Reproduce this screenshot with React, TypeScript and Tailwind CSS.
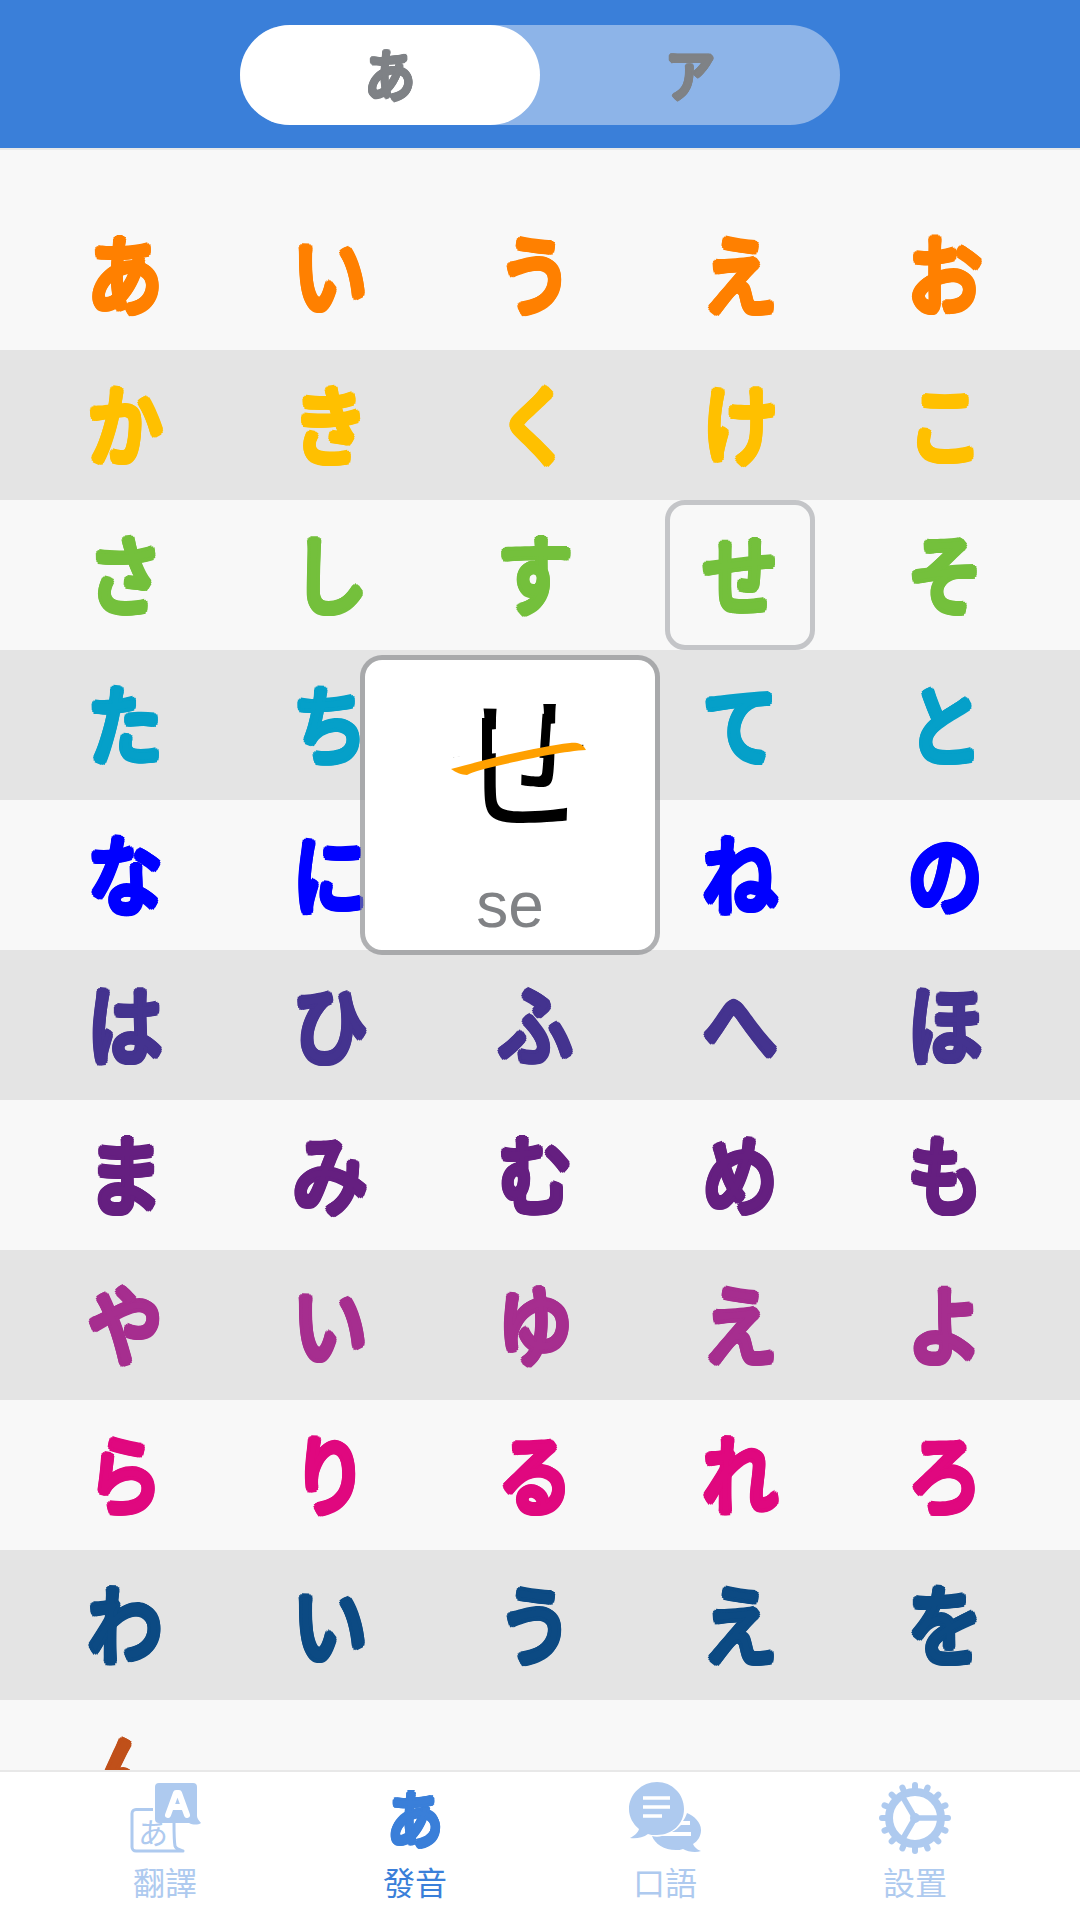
const CJK = "font-['Noto_Sans_CJK_JP',sans-serif]";
const CJK_TC = "font-['Noto_Sans_CJK_TC',sans-serif]";

type Row = { chars: string[]; color: string; dark: boolean; first?: boolean };

const rows: Row[] = [
  { chars: ["あ", "い", "う", "え", "お"], color: "text-[#ff8000]", dark: false, first: true },
  { chars: ["か", "き", "く", "け", "こ"], color: "text-[#ffc000]", dark: true },
  { chars: ["さ", "し", "す", "せ", "そ"], color: "text-[#74c03c]", dark: false },
  { chars: ["た", "ち", "つ", "て", "と"], color: "text-[#05a0c9]", dark: true },
  { chars: ["な", "に", "ぬ", "ね", "の"], color: "text-[#0000ff]", dark: false },
  { chars: ["は", "ひ", "ふ", "へ", "ほ"], color: "text-[#44338f]", dark: true },
  { chars: ["ま", "み", "む", "め", "も"], color: "text-[#651f80]", dark: false },
  { chars: ["や", "い", "ゆ", "え", "よ"], color: "text-[#a62e8f]", dark: true },
  { chars: ["ら", "り", "る", "れ", "ろ"], color: "text-[#e0087f]", dark: false },
  { chars: ["わ", "い", "う", "え", "を"], color: "text-[#0c4a83]", dark: true },
];

function Kana({ c }: { c: string }) {
  return (
    <span
      className={`${CJK} inline-block -translate-y-1 scale-x-[0.87] text-[86px] font-normal leading-none [text-shadow:4px_0,3.5px_2px,2px_3.5px,0_4px,-2px_3.5px,-3.5px_2px,-4px_0,-3.5px_-2px,-2px_-3.5px,0_-4px,2px_-3.5px,3.5px_-2px]`}
    >
      {c}
    </span>
  );
}

function TranslateIcon() {
  return (
    <svg width="72" height="72" viewBox="0 0 72 72" fill="none">
      <path d="M24 27.5H7a4 4 0 0 0-4 4V65a4 4 0 0 0 4 4h47c-3-1-7-2-8-5-1-5-1-14-1-24" stroke="#aecaef" strokeWidth="3" strokeLinejoin="round" />
      <path d="M30 1h34a4 4 0 0 1 4 4v29c0 2 2 5 4 7-3 2-8 2-12 0H30a4 4 0 0 1-4-4V5a4 4 0 0 1 4-4z" fill="#aecaef" />
      <path d="M39 33l8-22h3l8 22M42 25h13" stroke="#fff" strokeWidth="6" strokeLinecap="round" strokeLinejoin="round" fill="none" />
      <text x="9" y="62" fontSize="30" fill="#aecaef" fontFamily="'Noto Sans CJK JP', sans-serif">あ</text>
    </svg>
  );
}

function ChatIcon() {
  return (
    <svg width="72" height="72" viewBox="0 0 72 72">
      <path d="M28 0c15 0 27 12 27 27S43 53 28 53c-4 0-7 0-9-1-5 4-13 5-18 4 4-2 8-5 9-9C4 42 0 35 0 27 0 12 13 0 28 0z" fill="#aecaef" />
      <path d="M14 16h27M14 25h27M14 34h19" stroke="#fff" strokeWidth="3.5" />
      <path d="M58 31c7 3 14 9 14 17 0 6-3 11-8 14 1 3 5 6 8 7-5 2-13 1-18-2-2 1-5 1-7 1-12 0-21-6-24-14 3 1 7 1 10 0h29v-4H43c4-2 6-4 9-7h9v-4h-7c2-3 3-5 4-8z" fill="#aecaef" />
    </svg>
  );
}

function GearIcon() {
  const teeth = Array.from({ length: 16 }, (_, i) => (i * 360) / 16);
  return (
    <svg width="72" height="72" viewBox="0 0 72 72" fill="none">
      {teeth.map((a) => (
        <line key={a} x1="36" y1="8" x2="36" y2="3" stroke="#aecaef" strokeWidth="6" strokeLinecap="round" transform={`rotate(${a} 36 36)`} />
      ))}
      <circle cx="36" cy="36" r="26" stroke="#aecaef" strokeWidth="8" />
      <path d="M36 36h26M36 36L22 12M36 36L22 60" stroke="#aecaef" strokeWidth="5.5" />
      <circle cx="36" cy="36" r="5" fill="#aecaef" />
    </svg>
  );
}

function NavItem({ label, active, icon }: { label: string; active?: boolean; icon: React.ReactNode }) {
  return (
    <div className="flex w-[250px] flex-col items-center pt-[10px]">
      <div className="flex h-[72px] w-[72px] items-center justify-center">{icon}</div>
      <div className={`${CJK_TC} mt-[9px] text-[32px] leading-[36px] ${active ? "text-[#3a7fd9]" : "text-[#aecaef]"}`}>{label}</div>
    </div>
  );
}

const pillKana = `${CJK} inline-block -translate-y-[3px] scale-x-[0.9] text-[56px] font-normal leading-none [text-shadow:2.5px_0,2.2px_1.3px,1.3px_2.2px,0_2.5px,-1.3px_2.2px,-2.2px_1.3px,-2.5px_0,-2.2px_-1.3px,-1.3px_-2.2px,0_-2.5px,1.3px_-2.2px,2.2px_-1.3px]`;

export default function App() {
  return (
    <div className="flex h-[1920px] w-[1080px] flex-col overflow-hidden bg-white">
      <header className="flex h-[150px] shrink-0 justify-center border-b-2 border-[#e8e8e8] bg-[#3a7fd9] pt-[25px]">
        <div className="flex h-[100px] w-[600px] rounded-[50px] bg-[#8db4e8]">
          <div className="flex w-[300px] items-center justify-center rounded-[50px] bg-white text-[#7f8286]">
            <span className={pillKana}>あ</span>
          </div>
          <div className="flex w-[300px] items-center justify-center text-[#7f8286]">
            <span className={pillKana}>ア</span>
          </div>
        </div>
      </header>

      <main className="relative min-h-0 flex-1 overflow-hidden bg-[#f8f8f8]">
        {rows.map((r) => (
          <div
            key={r.chars[0]}
            className={`flex px-[22.5px] ${r.dark ? "bg-[#e4e4e4]" : "bg-[#f8f8f8]"} ${r.first ? "pt-[50px]" : ""}`}
          >
            {r.chars.map((c) => (
              <div key={c} className={`flex h-[150px] w-[205px] items-center justify-center ${r.color}`}>
                {c === "せ" ? (
                  <div className="flex h-[150px] w-[150px] items-center justify-center rounded-[20px] border-[5px] border-[#c4c5c8]">
                    <Kana c={c} />
                  </div>
                ) : (
                  <Kana c={c} />
                )}
              </div>
            ))}
          </div>
        ))}
        <div className="flex h-[150px] px-[22.5px] text-[#c0501a]">
          <div className="flex h-[150px] w-[205px] items-center justify-center">
            <Kana c="ん" />
          </div>
        </div>

        <div className="absolute left-[360px] top-[505px] flex h-[300px] w-[300px] flex-col items-center rounded-[22px] border-[5px] border-[#808285]/60 bg-white bg-clip-padding">
          <div className="relative flex h-[215px] w-full items-center justify-center">
            <span className={`${CJK} inline-block translate-x-[10px] -translate-y-[13px] text-[150px] leading-none text-black`}>せ</span>
            <svg className="absolute left-[75px] top-[30px]" width="160" height="100" viewBox="0 0 160 100">
              <line x1="6" y1="56" x2="150" y2="42" stroke="#fff" strokeWidth="24" />
              <line x1="47" y1="28" x2="47" y2="74" stroke="#000" strokeWidth="10" />
              <line x1="107" y1="24" x2="104" y2="68" stroke="#000" strokeWidth="9" />
              <path transform="translate(10 45)" d="M1 34C30 26 85 12 120 8c5-1 13 0 16 7-20 1-60 9-85 15-15 3-28 7-34 10-5 0-12-3-16-6z" fill="#ffa000" />
            </svg>
          </div>
          <div className="font-['Liberation_Sans',sans-serif] text-[64px] leading-[60px] text-[#808285]">se</div>
        </div>
      </main>

      <nav className="flex h-[150px] shrink-0 border-t-2 border-[#e8e8e8] bg-white px-[40px]">
        <NavItem label="翻譯" icon={<TranslateIcon />} />
        <NavItem
          label="發音"
          active
          icon={<span className={`${CJK} inline-block -translate-y-[2px] scale-x-[0.9] text-[62px] font-normal leading-none text-[#3a7fd9] [text-shadow:3px_0,2.6px_1.5px,1.5px_2.6px,0_3px,-1.5px_2.6px,-2.6px_1.5px,-3px_0,-2.6px_-1.5px,-1.5px_-2.6px,0_-3px,1.5px_-2.6px,2.6px_-1.5px]`}>あ</span>}
        />
        <NavItem label="口語" icon={<ChatIcon />} />
        <NavItem label="設置" icon={<GearIcon />} />
      </nav>
    </div>
  );
}
